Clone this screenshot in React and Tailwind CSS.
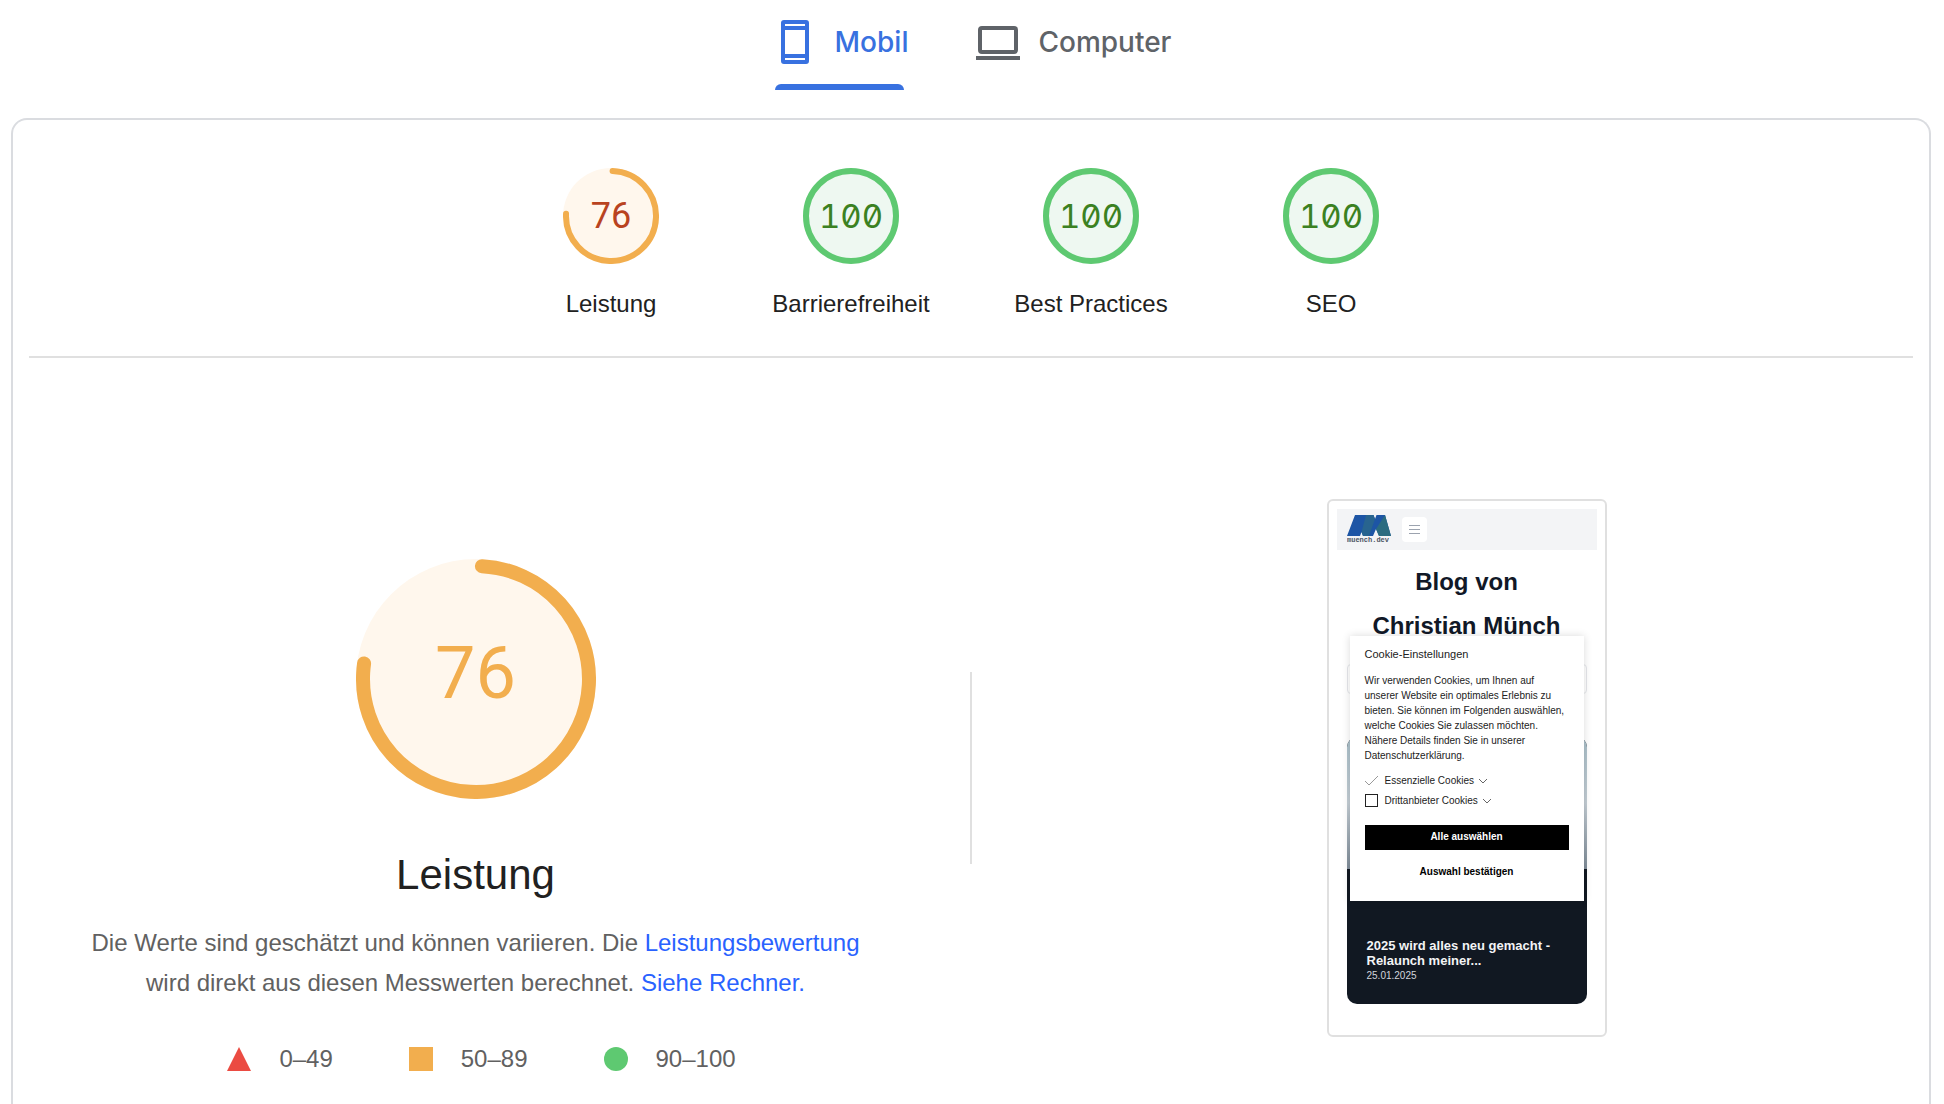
import { useState } from "react";

const TABS = [
  { id: "mobile", label: "Mobil", Icon: PhoneIcon },
  { id: "desktop", label: "Computer", Icon: LaptopIcon },
];

const SCORES = [
  { label: "Leistung", score: 76 },
  { label: "Barrierefreiheit", score: 100 },
  { label: "Best Practices", score: 100 },
  { label: "SEO", score: 100 },
];

function PhoneIcon() {
  return (
    <svg viewBox="0 0 24 24" className="size-12" fill="currentColor" aria-hidden="true">
      <path
        fillRule="evenodd"
        d="M6.500 1h11A1.500 1.500 0 0 1 19 2.500v19a1.500 1.500 0 0 1-1.500 1.500h-11A1.500 1.500 0 0 1 5 21.500v-19A1.500 1.500 0 0 1 6.500 1zM7 3v1h10V3zM7 6v12h10V6zM7 20v1h10v-1z"
      />
    </svg>
  );
}

function LaptopIcon() {
  return (
    <svg viewBox="0 0 24 24" className="size-12" fill="currentColor" aria-hidden="true">
      <path
        fillRule="evenodd"
        d="M4 4h16a2 2 0 0 1 2 2v10a2 2 0 0 1-2 2H4a2 2 0 0 1-2-2V6a2 2 0 0 1 2-2zM4 6v10h16V6zM1 19h22v2H1z"
      />
    </svg>
  );
}

function MuenchLogo() {
  return (
    <svg viewBox="0 0 44 28" className="h-7 w-11" role="img" aria-label="muench.dev">
      <path
        d="M0 21 8 0h18.500l1.500 4L29.500 0H38l6 21H32l-3-7-3 7H16l-1.500-4-1.500 4z"
        fill="#1d55a5"
      />
      <path d="M19 0h7.500l1.500 4-6 17h-6l-1.500-4z" fill="#28648f" />
      <path d="M38 0l6 21H32l-3-7z" fill="#2b6c80" />
      <text x="0" y="27" fontSize="7" fontFamily="Liberation Mono, monospace" fontWeight="700" fill="#4b5563">
        muench.dev
      </text>
    </svg>
  );
}

function Chevron() {
  return (
    <svg viewBox="0 0 10 6" className="ml-1 h-1.5 w-2.5" fill="none" stroke="#666666" aria-hidden="true">
      <path d="M1 1l4 4 4-4" />
    </svg>
  );
}

/* Arc angles are in degrees, clockwise from the top */
function Ring({ size, stroke, from, sweep, color, fill }) {
  const c = size / 2;
  return (
    <svg viewBox={`0 0 ${size} ${size}`} className="col-start-1 row-start-1 size-full" aria-hidden="true">
      <circle cx={c} cy={c} r={c} fill={fill} />
      <circle
        cx={c}
        cy={c}
        r={c - stroke / 2}
        fill="none"
        stroke={color}
        strokeWidth={stroke}
        strokeLinecap={sweep < 360 ? "round" : "butt"}
        pathLength={360}
        strokeDasharray={sweep < 360 ? `${sweep} 360` : undefined}
        transform={`rotate(${from - 90} ${c} ${c})`}
      />
    </svg>
  );
}

function ScoreGauge({ label, score }) {
  const good = score >= 90;
  return (
    <a href="#performance" className="flex w-60 flex-col items-center gap-6">
      <div className="grid size-24 place-items-center">
        <Ring
          size={96}
          stroke={6}
          from={good ? 0 : 2}
          sweep={good ? 360 : 271}
          color={good ? "#5ec971" : "#f2ae4e"}
          fill={good ? "#eef8f1" : "#fff7ed"}
        />
        <span
          className={
            good
              ? "col-start-1 row-start-1 font-['Inter',sans-serif] text-[33px] leading-10 text-[#3b8122] [font-feature-settings:'zero','tnum']"
              : "col-start-1 row-start-1 font-['Roboto',sans-serif] text-4xl leading-10 text-[#b9431f]"
          }
        >
          {score}
        </span>
      </div>
      <span className="text-2xl leading-8 text-[#212121]">{label}</span>
    </a>
  );
}

function PagePreview() {
  return (
    <div className="w-[280px] rounded-md border-2 border-[#e0e0e0] p-2">
      <div className="relative pb-[23px]">
        <header className="flex h-[41px] items-center gap-[11px] bg-[#f3f4f6] px-[10px]">
          <MuenchLogo />
          <button type="button" aria-label="Menü" className="grid size-[25px] place-items-center rounded bg-white">
            <svg viewBox="0 0 11 9" className="h-[9px] w-[11px]" stroke="#9ca3af" aria-hidden="true">
              <path d="M0 .5h11M0 4.500h11M0 8.500h11" />
            </svg>
          </button>
        </header>

        <h2 className="pt-[10px] text-center text-2xl leading-[44px] font-bold text-[#111827]">
          Blog von
          <br />
          Christian Münch
        </h2>
        <div className="mx-[10px] mt-4 h-[30px] rounded-sm border border-gray-200" />

        <article className="mx-[10px] mt-[43px] overflow-hidden rounded-[10px] bg-[#111822]">
          <div className="h-[132px] bg-linear-to-b from-[#a9bfc9] via-[#c3cdd4] to-[#7f8c98]" />
          <div className="flex h-[135px] flex-col justify-end px-5 pb-[21px]">
            <h3 className="text-[13px] leading-[15px] font-bold text-gray-100">
              2025 wird alles neu gemacht - Relaunch meiner...
            </h3>
            <p className="text-[10px] leading-[15px] text-gray-300">25.01.2025</p>
          </div>
        </article>

        {/* Cookie dialog */}
        <div
          role="dialog"
          aria-label="Cookie-Einstellungen"
          className="absolute inset-x-[13px] top-[127px] h-[265px] bg-white px-[15px] pt-[10px] text-[10px] text-[#222222] shadow-[0_0_8px_rgba(0,0,0,0.15)]"
        >
          <h4 className="text-[11px] leading-4">Cookie-Einstellungen</h4>
          <p className="mt-[11px] leading-[15px]">
            Wir verwenden Cookies, um Ihnen auf
            <br />
            unserer Website ein optimales Erlebnis zu
            <br />
            bieten. Sie können im Folgenden auswählen,
            <br />
            welche Cookies Sie zulassen möchten.
            <br />
            Nähere Details finden Sie in unserer
            <br />
            Datenschutzerklärung.
          </p>

          <div className="mt-2 leading-5">
            <label className="flex h-5 items-center">
              <span className="mr-[7px] grid size-[13px]">
                <input type="checkbox" defaultChecked disabled className="col-start-1 row-start-1 size-[13px] appearance-none" />
                <svg viewBox="0 0 13 13" className="col-start-1 row-start-1 size-[13px]" fill="none" stroke="#999999" aria-hidden="true">
                  <path d="M0 7l4 4 9-9" />
                </svg>
              </span>
              Essenzielle Cookies
              <Chevron />
            </label>
            <label className="flex h-5 items-center">
              <input type="checkbox" className="mr-[7px] size-[13px] appearance-none border border-[#222222]" />
              Drittanbieter Cookies
              <Chevron />
            </label>
          </div>

          <button type="button" className="mt-[14px] block h-[25px] w-full bg-black pb-0.5 font-bold text-white">
            Alle auswählen
          </button>
          <button type="button" className="mt-[10px] block h-[25px] w-full pb-0.5 font-bold text-black">
            Auswahl bestätigen
          </button>
        </div>
      </div>
    </div>
  );
}

function App() {
  const [tab, setTab] = useState("mobile");

  return (
    <div className="flex min-h-screen flex-col bg-white pr-[13px] pl-[11px] font-['Liberation_Sans',Arial,sans-serif]">
      {/* Tabs */}
      <nav className="flex h-[118px] items-start justify-center gap-[66px]">
        {TABS.map(({ id, label, Icon }) => (
          <button
            key={id}
            type="button"
            onClick={() => setTab(id)}
            className={
              tab === id
                ? "relative flex h-[90px] items-center gap-4 pb-1.5 text-[#3871e0]"
                : "relative flex h-[90px] items-center gap-4 pb-1.5 text-[#5f6368]"
            }
          >
            <Icon />
            <span className="font-['Inter',sans-serif] text-[28px] leading-9 font-medium">{label}</span>
            {tab === id && <span className="absolute inset-x-1 bottom-0 h-1.5 rounded-t-md bg-[#3871e0]" />}
          </button>
        ))}
      </nav>

      <main className="flex-1 rounded-t-2xl border-2 border-b-0 border-[#dadce0] px-4">
        {/* Score overview */}
        <section className="flex flex-wrap justify-center border-b-2 border-[#e0e0e0] pt-12 pb-9">
          {SCORES.map((s) => (
            <ScoreGauge key={s.label} {...s} />
          ))}
        </section>

        {/* Performance */}
        <section id="performance" className="grid grid-cols-[1fr_2px_1fr] items-center gap-12 pt-[90px]">
          <div className="flex flex-col items-center pt-[111px] pb-[10px]">
            <div className="grid size-60 place-items-center">
              <Ring size={240} stroke={14} from={3} sweep={275} color="#f2ae4e" fill="#fff7ed" />
              <span className="col-start-1 row-start-1 pb-[10px] font-['Roboto',sans-serif] text-7xl leading-none text-[#f2ae4e]">
                76
              </span>
            </div>

            <h1 className="mt-[50px] text-[42px] leading-[52px] text-[#212121]">Leistung</h1>

            <p className="mt-[22px] max-w-[800px] text-center text-2xl leading-10 text-[#616161]">
              Die Werte sind geschätzt und können variieren. Die{" "}
              <a href="#scoring" className="text-[#2962ff]">Leistungsbewertung</a>{" "}
              wird direkt aus diesen Messwerten berechnet.{" "}
              <a href="#calculator" className="text-[#2962ff]">Siehe Rechner.</a>
            </p>

            <ul className="mt-[38px] flex gap-[76px] pl-3 text-2xl leading-9 text-[#616161]">
              <li className="flex items-center gap-7">
                <svg viewBox="0 0 24 24" className="size-6" aria-hidden="true">
                  <path d="M12 0 24 24H0z" fill="#eb4b42" />
                </svg>
                0–49
              </li>
              <li className="flex items-center gap-7">
                <span className="size-6 bg-[#f2ae4e]" />
                50–89
              </li>
              <li className="flex items-center gap-7">
                <span className="size-6 rounded-full bg-[#5ec971]" />
                90–100
              </li>
            </ul>
          </div>

          <div className="h-48 bg-[#e0e0e0]" />

          <div className="flex justify-center">
            <PagePreview />
          </div>
        </section>
      </main>
    </div>
  );
}

export default App;
